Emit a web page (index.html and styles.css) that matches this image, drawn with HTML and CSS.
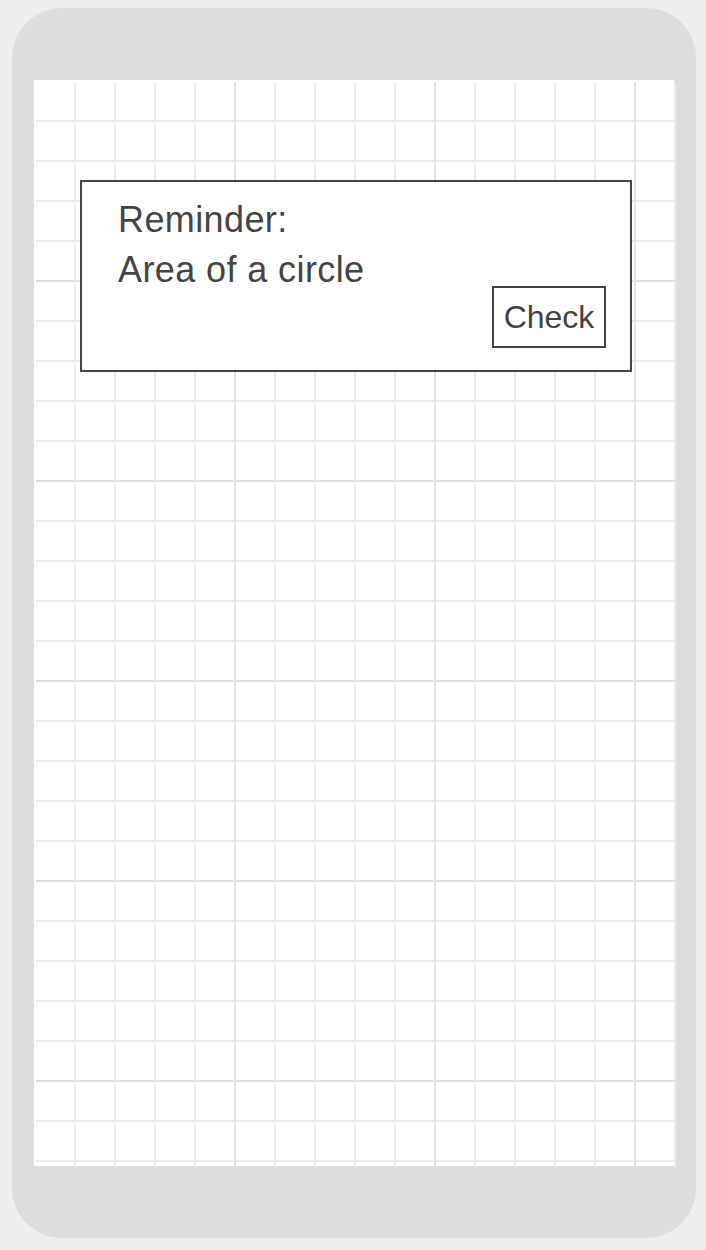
FILE: index.html
```html
<!DOCTYPE html>
<html>
<head>
<meta charset="utf-8">
<link rel="stylesheet" href="styles.css">
</head>
<body>
<div class="phone">
  <div class="screen">
    <div class="grid">
      <div class="card">
        <div class="card-text">
          <div>Reminder:</div>
          <div>Area of a circle</div>
        </div>
        <button class="check">Check</button>
      </div>
    </div>
  </div>
</div>
</body>
</html>
```
FILE: styles.css
```css
html, body {
  margin: 0;
  padding: 0;
  background: #eeeeee;
}
body {
  padding-top: 8px;
  width: 706px;
  height: 1250px;
  box-sizing: border-box;
  font-family: "Liberation Sans", Arial, sans-serif;
}
.phone {
  margin: 0 10px 0 12px;
  width: 684px;
  height: 1230px;
  background: #dddddd;
  border-radius: 50px;
  padding: 72px 0 0 22px;
  box-sizing: border-box;
}
.screen {
  width: 640px;
  height: 1086px;
  background: #ffffff;
  padding: 2px 0 0 2px;
  box-sizing: border-box;
}
.grid {
  width: 640px;
  height: 1086px;
  background-image:
    linear-gradient(to right, transparent 198px, #e0e0e0 198px),
    linear-gradient(to bottom, transparent 198px, #e0e0e0 198px),
    linear-gradient(to right, transparent 38px, #ececec 38px),
    linear-gradient(to bottom, transparent 38px, #ececec 38px);
  background-size: 200px 100%, 100% 200px, 40px 100%, 100% 40px;
  padding-top: 98px;
  padding-left: 44px;
  box-sizing: border-box;
}
.card {
  width: 552px;
  height: 192px;
  box-sizing: border-box;
  border: 2px solid #444444;
  background: #ffffff;
  display: flex;
  justify-content: space-between;
  padding: 13px 24px 22px 36px;
}
.card-text {
  font-size: 36px;
  line-height: 50px;
  letter-spacing: 0.4px;
  color: #444444;
}
.check {
  align-self: flex-end;
  width: 114px;
  height: 62px;
  border: 2px solid #444444;
  background: #ffffff;
  color: #444444;
  font-family: "Liberation Sans", Arial, sans-serif;
  font-size: 32px;
  padding: 0;
  margin: 0;
}
```
